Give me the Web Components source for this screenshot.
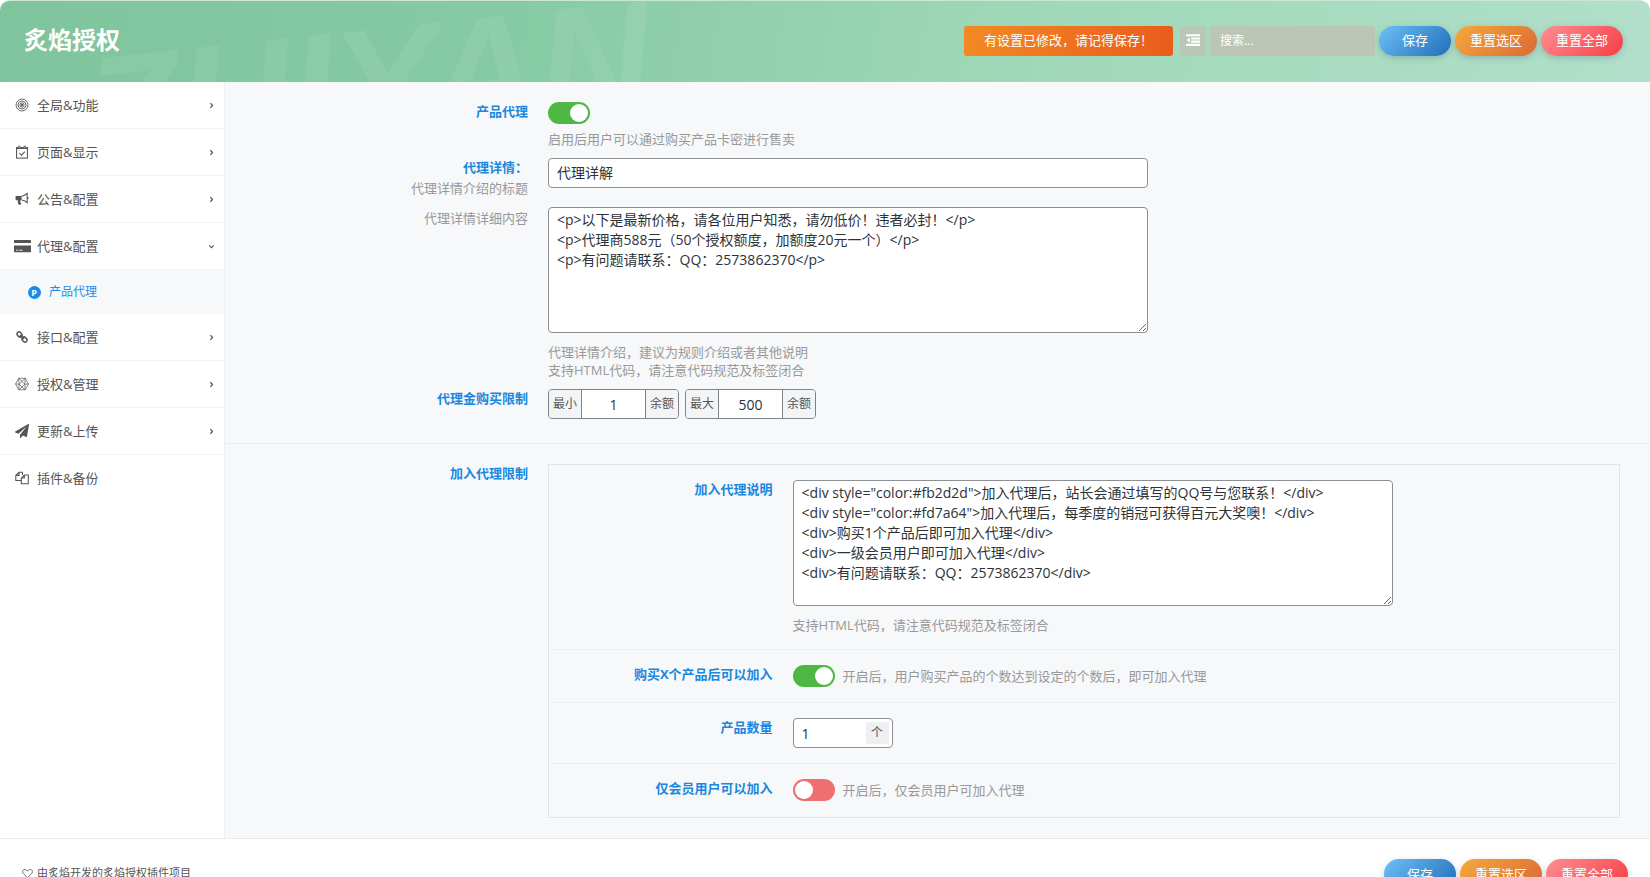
<!DOCTYPE html>
<html lang="zh-CN">
<head>
  <meta charset="UTF-8">
  <meta name="viewport" content="width=device-width, initial-scale=1.0">
  <title>炙焰授权</title>
  <style>
    body {
      margin: 0;
      height: 100vh;
      overflow: auto;
      scrollbar-width: none;
      background: #fff;
      color: #555;
      font-family: "Open Sans", "Noto Sans CJK SC", sans-serif;
      font-size: 13px;
    }
  </style>
</head>
<body>
  <settings-app></settings-app>

  <script type="text/javascript">
    // small helper, every component gets its own template
    function attach(el, html) {
      const template = document.createElement('template');
      template.innerHTML = html;
      const root = el.attachShadow({ mode: 'open' });
      root.appendChild(template.content.cloneNode(true));
      return root;
    }

    const ICONS = {
      target: `<g fill="none" stroke="currentColor"><circle cx="8" cy="8" r="6.8"/><circle cx="8" cy="8" r="4.5"/><circle cx="8" cy="8" r="2.4"/></g><circle cx="8" cy="8" r="1.3" fill="currentColor"/>`,
      calendar: `<g fill="none" stroke="currentColor" stroke-width="1.2"><rect x="1.8" y="3" width="12.4" height="12"/><path d="M5.2 9.4l2.2 2.2 3.9-4"/></g><path d="M1.5 2.8h13v1.8h-13zM3.6 .8h2.4v3.4H3.6zM10 .8h2.4v3.4H10z" fill="currentColor"/><path d="M4.8 1.6v2M11.200 1.600v2" stroke="#fff" stroke-width=".7"/>`,
      bullhorn: `<path d="M1.200 4.600h6.300v4.700h-1.300c-.7 1.200.1 2 .1 2.700.1.800.6 1.100 1.100 1.700-.7 1-2.800 1-3.500.2-.3-1.300-1.100-2.800-.5-4.600H1.800C1 9.300.6 8.800.6 8.200V5.700c0-.7.200-1.100.6-1.100z" fill="currentColor"/><path d="M7.500 4.800c2.600-.1 4.800-1.500 6.400-3.100v10.500C12.300 10.600 10.100 9.300 7.500 9.200M14 5.900c1.300.1 1.300 2 0 2.100" fill="none" stroke="currentColor" stroke-width="1.200"/>`,
      card: `<path d="M0 2.600c0-.5.300-.8.800-.8h14.400c.5 0 .8.300.8.800v2.100H0zM0 7.100h16v5.600c0 .5-.3.800-.8.800H.8c-.5 0-.8-.3-.8-.8z" fill="currentColor"/><path d="M2 11.500h2M5 11.500h3" stroke="#fff" stroke-width=".8"/>`,
      link: `<g fill="none" stroke="currentColor" stroke-width="1.700" transform="rotate(45 8 8)"><rect x=".8" y="5.700" width="6.200" height="4.600" rx="2.300"/><rect x="9" y="5.700" width="6.200" height="4.600" rx="2.300"/><path d="M5 8h6"/></g>`,
      hexagon: `<g fill="none" stroke="currentColor" stroke-width=".8"><path d="M4.300 1.400h7.400L15.400 8l-3.700 6.600H4.300L.6 8z"/><path d="M4.300 1.400L8 5l3.700-3.600M.6 8l4.200.2L4.300 14.600M15.400 8l-4.200.2.500 6.400M8 5L4.800 8.200 8 11.600l3.200-3.400zM4.300 14.600l3.700-3 3.700 3M4.300 1.400l.5 6.800M11.700 1.400l-.5 6.800"/></g>`,
      plane: `<path transform="scale(.00893)" d="M1764 11q33 24 27 64l-256 1536q-5 29-32 45-14 8-31 8-11 0-24-5l-453-185-242 295q-18 23-49 23-13 0-22-4-19-7-30.500-23.500t-11.500-36.500v-349l864-1059-1069 925-395-162q-37-14-40-55-2-40 32-59l1664-960q15-9 32-9 20 0 36 11z" fill="currentColor"/>`,
      files: `<g fill="none" stroke="currentColor" stroke-width="1.200" stroke-linejoin="round"><path d="M7 10.800H.9V5l3.600-3.500h4v3M4.600 1.600V5H1"/><path d="M7.200 14.600h8V4.600h-4.600L7.200 8zM10.700 4.700V8H7.300"/></g>`,
      outdent: `<path d="M0 1.300h16v2.500H0zM6 5.200h10v2.300H6zM6 8.700h10v2.300H6zM0 12.400h16v2.500H0zM4.500 5v6L.8 8z" fill="currentColor"/>`,
      heart: `<path d="M8 14L2.300 8.500C-1 5 2 1.200 5.300 2.300 6.700 2.700 7.500 4 8 4.700 8.500 4 9.300 2.700 10.700 2.300 14 1.200 17 5 13.700 8.500z" fill="none" stroke="currentColor" stroke-width="1.200"/>`,
      right: `<path d="M6 4l4 4-4 4" fill="none" stroke="currentColor" stroke-width="2"/>`,
      down: `<path d="M4 6l4 4 4-4" fill="none" stroke="currentColor" stroke-width="2"/>`
    };

    class UiIcon extends HTMLElement {
      connectedCallback() {
        if (this.shadowRoot) return;
        attach(this, `
          <style>
            :host { display: inline-flex; width: 14px; height: 14px; flex: none; }
            svg { width: 100%; height: 100%; }
          </style>
          <svg viewBox="0 0 16 16" aria-hidden="true">${ICONS[this.getAttribute('name')]}</svg>
        `);
      }
    }

    // save / reset buttons, used in the header and in the footer
    class ActionButtons extends HTMLElement {
      constructor() {
        super();
        attach(this, `
          <style>
            :host { display: flex; gap: 4px; }
            button {
              height: 30px;
              padding: 0 15px 2px;
              border: 0;
              border-radius: 15px;
              color: #fff;
              font: inherit;
              cursor: pointer;
              white-space: nowrap;
              box-shadow: 0 2px 6px rgba(60, 70, 90, .25);
            }
            .save { padding: 0 23px 2px; background: linear-gradient(135deg, #6cc0f5, #1f6fba); }
            .section { background: linear-gradient(135deg, #f5a83c, #db6a35); }
            .all { background: linear-gradient(135deg, #fd8d91, #f73f45); }
          </style>
          <button class="save" type="submit">保存</button>
          <button class="section" type="button">重置选区</button>
          <button class="all" type="button">重置全部</button>
        `);
      }
    }

    class AppHeader extends HTMLElement {
      constructor() {
        super();
        attach(this, `
          <style>
            :host {
              display: flex;
              align-items: center;
              justify-content: space-between;
              position: relative;
              overflow: hidden;
              box-sizing: border-box;
              height: 82px;
              padding: 0 27px 2px 24px;
              border-top: 1px solid #c9e8cf;
              border-radius: 10px 10px 0 0;
              background: linear-gradient(100deg, #7fc49c 0%, #85caa2 30%, #9fd8b8 62%, #b1dfcb 100%);
            }
            .mark { position: absolute; left: 0; top: 0; width: 700px; height: 82px; }
            h1 { position: relative; margin: 0; padding-bottom: 2px; color: #fff; font-size: 24px; line-height: 30px; }
            .tools { position: relative; display: flex; gap: 4px; }
            .notice {
              height: 30px;
              line-height: 28px;
              padding: 0 20px;
              margin-right: 3px;
              border-radius: 3px;
              color: #fff;
              background: linear-gradient(100deg, #f28a24, #ea5c1c);
            }
            .expand {
              display: flex;
              align-items: center;
              justify-content: center;
              width: 26px;
              height: 30px;
              padding: 0 0 2px;
              border: 0;
              border-radius: 3px;
              color: #fff;
              background: #b9c8b6;
            }
            input {
              box-sizing: border-box;
              width: 165px;
              height: 30px;
              padding: 0 10px;
              border: 0;
              border-radius: 3px;
              color: #fff;
              background: #bcc6b7;
              font: inherit;
              font-size: 12px;
            }
            input::placeholder { color: #fff; }
          </style>
          <svg class="mark" aria-hidden="true">
            <text x="90" y="166" transform="rotate(-6 90 166)" font-family="Liberation Sans" font-size="156" font-weight="bold" font-style="italic" fill="#fff" fill-opacity=".07">ZHIYAN</text>
          </svg>
          <h1>炙焰授权</h1>
          <div class="tools">
            <div class="notice">有设置已修改，请记得保存！</div>
            <button class="expand" type="button" aria-label="展开"><ui-icon name="outdent"></ui-icon></button>
            <input type="text" placeholder="搜索..." aria-label="搜索">
            <action-buttons></action-buttons>
          </div>
        `);
      }
    }

    class NavItem extends HTMLElement {
      connectedCallback() {
        if (this.shadowRoot) return;
        const arrow = this.getAttribute('arrow');
        const icon = this.getAttribute('icon');
        attach(this, `
          <style>
            :host { display: block; }
            a {
              display: flex;
              align-items: center;
              box-sizing: border-box;
              height: 47px;
              padding: 0 8px 0 14px;
              border-bottom: 1px solid #f2f3f6;
              color: #555;
              text-decoration: none;
            }
            .icon { display: flex; justify-content: center; width: 16px; margin-right: 7px; }
            .icon.wide ui-icon { width: 17px; height: 17px; }
            .text { flex: 1; padding-bottom: 2px; }
            .arrow { width: 9px; height: 9px; }
            :host([sub]) a {
              height: 44px;
              padding-left: 27px;
              border: 0;
              background: #f6f8fa;
              color: #1a8be6;
              font-size: 12px;
            }
            :host([sub]) .icon { width: 14px; margin-right: 8px; }
            :host([last]) a { border-color: transparent; }
            .badge {
              width: 13px;
              height: 13px;
              border-radius: 50%;
              background: #1a8be6;
              color: #fff;
              font-size: 9px;
              font-weight: bold;
              line-height: 13px;
              text-align: center;
            }
          </style>
          <a href="#">
            <span class="icon ${icon === 'card' ? 'wide' : ''}">${icon ? `<ui-icon name="${icon}"></ui-icon>` : '<span class="badge">P</span>'}</span>
            <span class="text"><slot></slot></span>
            ${arrow ? `<ui-icon class="arrow" name="${arrow}"></ui-icon>` : ''}
          </a>
        `);
      }
    }

    class SideNav extends HTMLElement {
      constructor() {
        super();
        attach(this, `
          <style>
            :host { display: block; box-sizing: border-box; background: #fff; border-right: 1px solid #eceef2; }
          </style>
          <nav>
            <nav-item icon="target" arrow="right">全局&amp;功能</nav-item>
            <nav-item icon="calendar" arrow="right">页面&amp;显示</nav-item>
            <nav-item icon="bullhorn" arrow="right">公告&amp;配置</nav-item>
            <nav-item icon="card" arrow="down">代理&amp;配置</nav-item>
            <nav-item sub>产品代理</nav-item>
            <nav-item icon="link" arrow="right">接口&amp;配置</nav-item>
            <nav-item icon="hexagon" arrow="right">授权&amp;管理</nav-item>
            <nav-item icon="plane" arrow="right">更新&amp;上传</nav-item>
            <nav-item icon="files" last>插件&amp;备份</nav-item>
          </nav>
        `);
      }
    }

    // one setting: title column on the left, control on the right
    class FormRow extends HTMLElement {
      constructor() {
        super();
        attach(this, `
          <style>
            :host { display: flex; gap: 20px; }
            .title { flex: 0 0 20%; text-align: right; line-height: 18px; }
            .content { flex: 1; min-width: 0; }
          </style>
          <div class="title"><slot name="title"></slot></div>
          <div class="content"><slot></slot></div>
        `);
      }
    }

    class SettingsPanel extends HTMLElement {
      constructor() {
        super();
        attach(this, `
          <style>
            :host { display: block; background: #f6f8fa; }
            section { display: flex; flex-direction: column; gap: 10px; padding: 20px 30px 24px; }
            section + section { padding-bottom: 20px; border-top: 1px solid #eceef1; }
            label.name, span.name { color: #1a87e0; font-weight: bold; }
            .note { display: block; margin-top: 3px; color: #999; }
            .note.alone { margin-top: 2px; }
            p { margin: 10px 0 0; color: #999; line-height: 18px; }
            p.near { margin-top: 6px; }
            input, textarea {
              box-sizing: border-box;
              border: 1px solid #8c8f94;
              border-radius: 4px;
              background: #fff;
              color: #2c3338;
              font: inherit;
              font-size: 14px;
            }
            .text { display: block; width: 600px; max-width: 100%; height: 30px; padding: 0 8px 2px; }
            textarea { display: block; width: 600px; max-width: 100%; height: 126px; padding: 2px 8px; line-height: 20px; }
            .switch {
              appearance: none;
              display: block;
              flex: none;
              width: 42px;
              height: 22px;
              margin: 0;
              padding: 2px;
              border: 0;
              border-radius: 11px;
              background: #ed6f6f;
            }
            .switch::before { content: ''; display: block; width: 18px; height: 18px; border-radius: 50%; background: #fff; }
            .switch:checked { background: #4fb845; }
            .switch:checked::before { margin-left: auto; }
            .line { display: flex; align-items: center; gap: 8px; color: #999; line-height: 22px; }
            .ranges { display: flex; gap: 6px; }
            .range {
              display: flex;
              overflow: hidden;
              box-sizing: border-box;
              height: 30px;
              border: 1px solid #7e8186;
              border-radius: 4px;
            }
            .range input { width: 65px; padding: 0; border-width: 0 1px; border-color: #7e8186; border-radius: 0; text-align: center; }
            .range label, .range span { padding: 0 4px; background: #f3f4f6; color: #555; font-size: 12px; line-height: 28px; }
            .count {
              display: flex;
              align-items: center;
              box-sizing: border-box;
              width: 100px;
              height: 30px;
              padding-right: 3px;
              border: 1px solid #8c8f94;
              border-radius: 4px;
              background: #fff;
            }
            .count input { flex: 1; min-width: 0; padding: 0 8px; border: 0; background: none; }
            .count span { width: 23px; line-height: 22px; background: #eeeff1; font-size: 12px; text-align: center; }
            .box { margin: 0; padding: 0 3px 1px; border: 1px solid #e2e4e8; }
            .box form-row { padding: 15px 13px; }
            .box form-row + form-row { border-top: 1px solid #eceef1; }
          </style>
          <section>
            <form-row>
              <label class="name" slot="title" for="agent">产品代理</label>
              <input class="switch" id="agent" type="checkbox" checked>
              <p class="near">启用后用户可以通过购买产品卡密进行售卖</p>
            </form-row>
            <form-row>
              <label class="name" slot="title" for="heading">代理详情：</label>
              <span class="note" slot="title">代理详情介绍的标题</span>
              <input class="text" id="heading" type="text" value="代理详解">
            </form-row>
            <form-row>
              <label class="note alone" slot="title" for="detail">代理详情详细内容</label>
              <textarea id="detail">&lt;p&gt;以下是最新价格，请各位用户知悉，请勿低价！违者必封！&lt;/p&gt;
&lt;p&gt;代理商588元（50个授权额度，加额度20元一个）&lt;/p&gt;
&lt;p&gt;有问题请联系：QQ：2573862370&lt;/p&gt;</textarea>
              <p>代理详情介绍，建议为规则介绍或者其他说明<br>支持HTML代码，请注意代码规范及标签闭合</p>
            </form-row>
            <form-row>
              <span class="name" slot="title">代理金购买限制</span>
              <div class="ranges">
                <div class="range"><label for="min">最小</label><input id="min" type="text" value="1"><span>余额</span></div>
                <div class="range"><label for="max">最大</label><input id="max" type="text" value="500"><span>余额</span></div>
              </div>
            </form-row>
          </section>
          <section>
            <form-row>
              <span class="name" slot="title">加入代理限制</span>
              <div class="box">
                <form-row>
                  <label class="name" slot="title" for="explain">加入代理说明</label>
                  <textarea id="explain">&lt;div style="color:#fb2d2d"&gt;加入代理后，站长会通过填写的QQ号与您联系！&lt;/div&gt;
&lt;div style="color:#fd7a64"&gt;加入代理后，每季度的销冠可获得百元大奖噢！&lt;/div&gt;
&lt;div&gt;购买1个产品后即可加入代理&lt;/div&gt;
&lt;div&gt;一级会员用户即可加入代理&lt;/div&gt;
&lt;div&gt;有问题请联系：QQ：2573862370&lt;/div&gt;</textarea>
                  <p>支持HTML代码，请注意代码规范及标签闭合</p>
                </form-row>
                <form-row>
                  <label class="name" slot="title" for="bought">购买X个产品后可以加入</label>
                  <div class="line"><input class="switch" id="bought" type="checkbox" checked>开启后，用户购买产品的个数达到设定的个数后，即可加入代理</div>
                </form-row>
                <form-row>
                  <label class="name" slot="title" for="count">产品数量</label>
                  <div class="count"><input id="count" type="text" value="1"><span>个</span></div>
                </form-row>
                <form-row>
                  <label class="name" slot="title" for="vip">仅会员用户可以加入</label>
                  <div class="line"><input class="switch" id="vip" type="checkbox">开启后，仅会员用户可加入代理</div>
                </form-row>
              </div>
            </form-row>
          </section>
        `);
      }
    }

    class AppFooter extends HTMLElement {
      constructor() {
        super();
        attach(this, `
          <style>
            :host {
              display: flex;
              justify-content: space-between;
              align-items: center;
              padding: 20px 22px;
              border-top: 1px solid #e9eaee;
              background: #fff;
            }
            .credit { display: flex; align-items: center; gap: 4px; padding-bottom: 2px; font-size: 11px; line-height: 16px; }
            .credit ui-icon { width: 11px; height: 11px; }
          </style>
          <div class="credit"><ui-icon name="heart"></ui-icon>由炙焰开发的炙焰授权插件项目</div>
          <action-buttons></action-buttons>
        `);
      }
    }

    class SettingsApp extends HTMLElement {
      constructor() {
        super();
        attach(this, `
          <style>
            :host { display: block; }
            .body { display: flex; }
            side-nav { flex: 0 0 225px; }
            settings-panel { flex: 1; min-width: 0; }
          </style>
          <app-header></app-header>
          <div class="body">
            <side-nav></side-nav>
            <settings-panel></settings-panel>
          </div>
          <app-footer></app-footer>
        `);
      }
    }

    window.customElements.define('ui-icon', UiIcon);
    window.customElements.define('action-buttons', ActionButtons);
    window.customElements.define('app-header', AppHeader);
    window.customElements.define('nav-item', NavItem);
    window.customElements.define('side-nav', SideNav);
    window.customElements.define('form-row', FormRow);
    window.customElements.define('settings-panel', SettingsPanel);
    window.customElements.define('app-footer', AppFooter);
    window.customElements.define('settings-app', SettingsApp);
  </script>
</body>
</html>
